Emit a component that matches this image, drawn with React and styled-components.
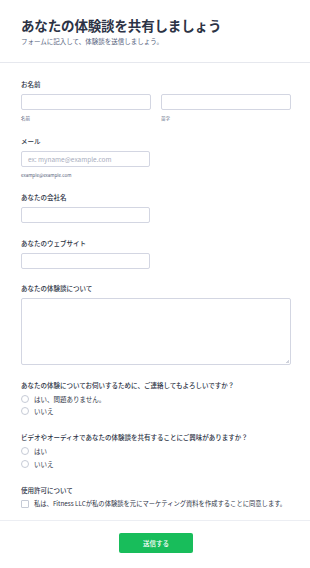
import React from 'react'
import styled, { createGlobalStyle } from 'styled-components'

const GlobalStyle = createGlobalStyle`
  html, body {
    overflow: hidden;
  }
  body {
    margin: 0;
    background: #ffffff;
    font-family: "Noto Sans CJK JP", "Noto Sans", sans-serif;
    color: #2c3345;
  }
`

const Page = styled.div`
  width: 310px;
  background: #fff;
`

const Header = styled.header`
  padding: 16px 21px 16px;
  border-bottom: 1px solid #e6e8ee;
`

const Title = styled.h1`
  margin: 0;
  font-size: 13.5px;
  line-height: 18px;
  font-weight: 700;
  color: #2c3345;
  letter-spacing: -0.15px;
`

const Subtitle = styled.p`
  margin: 2px 0 0;
  font-size: 6.5px;
  line-height: 10px;
  color: #57647e;
`

const FormBody = styled.div`
  display: flex;
  flex-direction: column;
  gap: 14.5px;
  padding: 16px 19px 10px 21px;
  border-bottom: 1px solid #eceef3;
`

const Field = styled.div`
  display: flex;
  flex-direction: column;
`

const Label = styled.div`
  font-size: 6.5px;
  line-height: 10px;
  font-weight: 500;
  color: #2c3345;
  white-space: nowrap;
  margin-bottom: ${p => (p.$tight ? '3px' : '5px')};
`

const Row = styled.div`
  display: flex;
  gap: 10px;
`

const Col = styled.div`
  flex: 1;
  display: flex;
  flex-direction: column;
`

const Input = styled.div`
  box-sizing: border-box;
  width: ${p => (p.$full ? '100%' : '129px')};
  height: ${p => p.$h || 16}px;
  border: 1px solid #d3d6e2;
  border-radius: 2px;
  background: #fff;
  display: flex;
  align-items: center;
  padding: 0 6px;
  font-size: 6.5px;
  color: #a8adbd;
  position: relative;
`

const Grip = styled.span`
  position: absolute;
  right: 1px;
  bottom: 1px;
  width: 3px;
  height: 3px;
  background: linear-gradient(135deg, transparent 50%, #d0d3dc 50%);
`

const Sub = styled.div`
  margin-top: 5px;
  font-size: 4.5px;
  line-height: 6px;
  color: #57647e;
`

const Options = styled.div`
  display: flex;
  flex-direction: column;
`

const Option = styled.div`
  display: flex;
  align-items: center;
  height: 12.5px;
  font-size: ${p => (p.$small ? '6.3px' : '6.5px')};
  color: #2c3345;
  white-space: nowrap;
`

const Radio = styled.span`
  box-sizing: border-box;
  width: 8px;
  height: 8px;
  border: 1px solid #c6cbd6;
  border-radius: ${p => (p.$square ? '1px' : '50%')};
  margin-right: 5px;
  flex: none;
`

const Footer = styled.div`
  display: flex;
  justify-content: center;
  padding: 12px 0 10px 2px;
`

const Submit = styled.button`
  width: 74px;
  height: 20px;
  border: none;
  border-radius: 2px;
  background: #18bd5b;
  color: #fff;
  font-family: inherit;
  font-size: 6.5px;
  font-weight: 500;
`

const App = () => (
  <Page>
    <GlobalStyle />
    <Header>
      <Title>あなたの体験談を共有しましょう</Title>
      <Subtitle>フォームに記入して、体験談を送信しましょう。</Subtitle>
    </Header>
    <FormBody>
      <Field>
        <Label>お名前</Label>
        <Row>
          <Col>
            <Input $full />
            <Sub>名前</Sub>
          </Col>
          <Col>
            <Input $full />
            <Sub>苗字</Sub>
          </Col>
        </Row>
      </Field>
      <Field>
        <Label>メール</Label>
        <Input>ex: myname@example.com</Input>
        <Sub>example@example.com</Sub>
      </Field>
      <Field>
        <Label>あなたの会社名</Label>
        <Input />
      </Field>
      <Field>
        <Label>あなたのウェブサイト</Label>
        <Input />
      </Field>
      <Field>
        <Label>あなたの体験談について</Label>
        <Input $full $h={67}>
          <Grip />
        </Input>
      </Field>
      <Field>
        <Label $tight>あなたの体験についてお伺いするために、ご連絡してもよろしいですか？</Label>
        <Options>
          <Option><Radio />はい、問題ありません。</Option>
          <Option><Radio />いいえ</Option>
        </Options>
      </Field>
      <Field>
        <Label $tight>ビデオやオーディオであなたの体験談を共有することにご興味がありますか？</Label>
        <Options>
          <Option><Radio />はい</Option>
          <Option><Radio />いいえ</Option>
        </Options>
      </Field>
      <Field>
        <Label $tight>使用許可について</Label>
        <Options>
          <Option $small><Radio $square />私は、Fitness LLCが私の体験談を元にマーケティング資料を作成することに同意します。</Option>
        </Options>
      </Field>
    </FormBody>
    <Footer>
      <Submit>送信する</Submit>
    </Footer>
  </Page>
)

export default App
